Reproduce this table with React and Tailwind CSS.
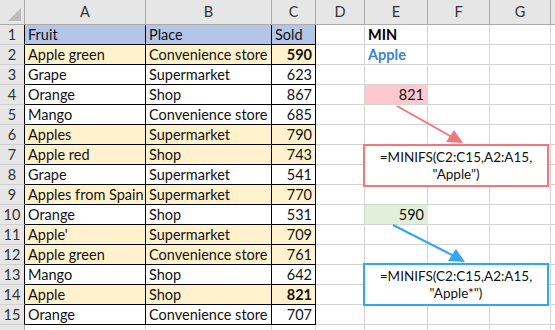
const rows = [
  { fruit: 'Fruit', place: 'Place', sold: 'Sold', head: true },
  { fruit: 'Apple green', place: 'Convenience store', sold: '590', hl: true, bold: true },
  { fruit: 'Grape', place: 'Supermarket', sold: '623' },
  { fruit: 'Orange', place: 'Shop', sold: '867' },
  { fruit: 'Mango', place: 'Convenience store', sold: '685' },
  { fruit: 'Apples', place: 'Supermarket', sold: '790', hl: true },
  { fruit: 'Apple red', place: 'Shop', sold: '743', hl: true },
  { fruit: 'Grape', place: 'Supermarket', sold: '541' },
  { fruit: 'Apples from Spain', place: 'Supermarket', sold: '770', hl: true },
  { fruit: 'Orange', place: 'Shop', sold: '531' },
  { fruit: "Apple'", place: 'Supermarket', sold: '709', hl: true },
  { fruit: 'Apple green', place: 'Convenience store', sold: '761', hl: true },
  { fruit: 'Mango', place: 'Shop', sold: '642' },
  { fruit: 'Apple', place: 'Shop', sold: '821', hl: true, bold: true },
  { fruit: 'Orange', place: 'Convenience store', sold: '707' },
];

// Column E contents by row number
const colE = {
  1: { text: 'MIN', cls: 'font-bold text-black' },
  2: { text: 'Apple', cls: 'font-bold text-[#3b86c9]' },
  4: { text: '821', cls: 'justify-end bg-[#ffc7ce] border-r-[#ffc7ce]' },
  10: { text: '590', cls: 'justify-end bg-[#e2efda] border-r-[#e2efda]' },
};

// H only shows as a sliver at the right edge, so no label
const letters = ['A', 'B', 'C', 'D', 'E', 'F', 'G', ''];

const Cell = ({ className = '', children }) => (
  <div className={`h-5 flex items-center px-[3px] border-r border-b border-[#d4d4d4] whitespace-nowrap overflow-hidden ${className}`}>
    {children}
  </div>
);

const FormulaBox = ({ top, color, arg }) => (
  <div
    className={`absolute left-[363px] w-[186px] h-[43px] bg-white border-2 flex flex-col items-center justify-center leading-[17px] text-[13.5px] text-[#111] ${color}`}
    style={{ top }}
  >
    <span>=MINIFS(C2:C15,A2:A15,</span>
    <span>{arg}</span>
  </div>
);

export default function App() {
  return (
    <div className="relative w-[555px] h-[330px] overflow-hidden bg-white text-[14.5px] text-[#111]" style={{ fontFamily: 'Lato, "Open Sans", sans-serif' }}>
      <div className="grid grid-cols-[25px_121px_126px_44px_49px_63px_62px_61px_60px]">
        {/* header row */}
        <div className="h-[25px] bg-[#e6e6e6] border-r border-b border-[#ababab] flex items-end justify-end p-[3px]">
          <svg width="13" height="13" viewBox="0 0 13 13">
            <polygon points="13,0 13,13 0,13" fill="#bcbcbc" />
          </svg>
        </div>
        {letters.map((l, i) => (
          <div key={i} className="h-[25px] bg-[#e6e6e6] border-r border-b border-[#ababab] flex items-center justify-center text-[#333]">
            {l}
          </div>
        ))}

        {rows.map((r, i) => {
          const n = i + 1;
          const fill = r.head ? 'bg-[#b4c6e7]' : r.hl ? 'bg-[#fff2cc]' : 'bg-white';
          const e = colE[n];
          return [
            <div key={`n${n}`} className="h-5 bg-[#e6e6e6] border-r border-r-black border-b border-b-[#d0d0d0] flex items-center justify-center text-[#333]">
              {n}
            </div>,
            <Cell key={`a${n}`} className={`${fill} border-black`}>{r.fruit}</Cell>,
            <Cell key={`b${n}`} className={`${fill} border-black`}>{r.place}</Cell>,
            <Cell key={`c${n}`} className={`${fill} border-black ${r.head ? '' : 'justify-end'} ${r.bold ? 'font-bold' : ''}`}>{r.sold}</Cell>,
            <Cell key={`d${n}`} />,
            <Cell key={`e${n}`} className={e ? e.cls : ''}>{e ? e.text : ''}</Cell>,
            <Cell key={`f${n}`} />,
            <Cell key={`g${n}`} />,
            <Cell key={`h${n}`} />,
          ];
        })}

        {/* partial row 16 */}
        <div className="h-5 bg-[#e6e6e6] border-r border-[#ababab]" />
        {letters.map((l, i) => (
          <Cell key={`x${i}`} />
        ))}
      </div>

      <svg className="absolute left-0 top-0 pointer-events-none" width="555" height="330">
        <line x1="397" y1="106" x2="452" y2="137" stroke="#f3767d" strokeWidth="2" />
        <polygon points="463,143 446,142 454,130" fill="#f3767d" />
        <line x1="393" y1="225" x2="454" y2="256" stroke="#30a6f4" strokeWidth="2" />
        <polygon points="465,262 448,261 456,249" fill="#30a6f4" />
      </svg>

      <FormulaBox top={144} color="border-[#f3767d]" arg={'"Apple")'} />
      <FormulaBox top={263} color="border-[#30a6f4]" arg={'"Apple*")'} />
    </div>
  );
}
